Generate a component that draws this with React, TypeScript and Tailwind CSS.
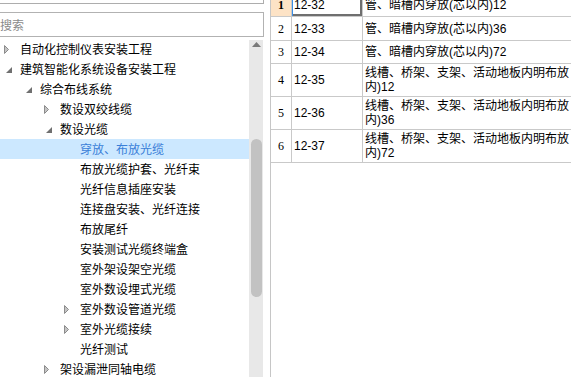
import React from 'react'

type Node = {
  level: number
  text: string
  arrow?: 'open' | 'closed'
  selected?: boolean
}

const nodes: Node[] = [
  { level: 0, text: '自动化控制仪表安装工程', arrow: 'closed' },
  { level: 0, text: '建筑智能化系统设备安装工程', arrow: 'open' },
  { level: 1, text: '综合布线系统', arrow: 'open' },
  { level: 2, text: '数设双绞线缆', arrow: 'closed' },
  { level: 2, text: '数设光缆', arrow: 'open' },
  { level: 3, text: '穿放、布放光缆', selected: true },
  { level: 3, text: '布放光缆护套、光纤束' },
  { level: 3, text: '光纤信息插座安装' },
  { level: 3, text: '连接盘安装、光纤连接' },
  { level: 3, text: '布放尾纤' },
  { level: 3, text: '安装测试光缆终端盒' },
  { level: 3, text: '室外架设架空光缆' },
  { level: 3, text: '室外数设埋式光缆' },
  { level: 3, text: '室外数设管道光缆', arrow: 'closed' },
  { level: 3, text: '室外光缆接续', arrow: 'closed' },
  { level: 3, text: '光纤测试' },
  { level: 2, text: '架设漏泄同轴电缆', arrow: 'closed' },
]

const indent = ['pl-0', 'pl-5', 'pl-10', 'pl-15']

const rows = [
  { n: '1', code: '12-32', lines: ['管、暗槽内穿放(芯以内)12'], active: true },
  { n: '2', code: '12-33', lines: ['管、暗槽内穿放(芯以内)36'] },
  { n: '3', code: '12-34', lines: ['管、暗槽内穿放(芯以内)72'] },
  { n: '4', code: '12-35', lines: ['线槽、桥架、支架、活动地板内明布放', '内)12'] },
  { n: '5', code: '12-36', lines: ['线槽、桥架、支架、活动地板内明布放', '内)36'] },
  { n: '6', code: '12-37', lines: ['线槽、桥架、支架、活动地板内明布放', '内)72'] },
]

function Arrow({ kind }: { kind?: 'open' | 'closed' }) {
  if (kind === 'closed') {
    return (
      <svg width="5" height="9" viewBox="0 0 5 9" className="ml-[4px]">
        <path d="M0.5 0.5 L4.5 4.5 L0.5 8.5 Z" fill="#c4c4c4" stroke="#8c8c8c" />
      </svg>
    )
  }
  if (kind === 'open') {
    return (
      <svg width="6" height="6" viewBox="0 0 6 6" className="ml-[6px] translate-y-[1px]">
        <path d="M6 0 L6 6 L0 6 Z" fill="#707070" />
      </svg>
    )
  }
  return null
}

export default function App() {
  return (
    <div
      className="flex h-[377px] w-[571px] overflow-hidden bg-white text-[12px] text-black"
      style={{ fontFamily: '"Noto Sans CJK SC", sans-serif' }}
    >
      {/* left: search + tree */}
      <div className="flex w-[264px] shrink-0 flex-col">
        <div className="h-[4px] border-b border-r border-[#adadad]" />
        <div className="mt-[8px] flex h-[25px] items-center border-y border-r border-[#b2b2b2] text-[#8a8a8a]">
          搜索
        </div>
        <div className="mt-[2px] flex min-h-0 flex-1">
          <div className="w-[249px] overflow-hidden">
            {nodes.map((node, i) => (
              <div
                key={i}
                className={
                  'flex h-[20px] items-center whitespace-nowrap ' +
                  indent[node.level] +
                  (node.selected ? ' bg-[#cce8ff] text-[#3a7fd8]' : '')
                }
              >
                <div className="flex w-[20px] shrink-0 items-center">
                  <Arrow kind={node.arrow} />
                </div>
                <span className="leading-[20px]">{node.text}</span>
              </div>
            ))}
          </div>
          {/* scrollbar */}
          <div className="mt-px flex w-[14px] flex-col items-center bg-[#e8e8e8]">
            <svg width="9" height="5" viewBox="0 0 9 5" className="mt-[2px]">
              <path d="M0 5 L4.5 0 L9 5 Z" fill="#7a7a7a" />
            </svg>
            <div className="mt-[92px] h-[158px] w-[11px] rounded-full bg-[#c2c2c2]" />
          </div>
        </div>
      </div>

      <div className="w-[6px] shrink-0" />

      {/* right: grid */}
      <div
        className="flex-1 border-l border-[#c6c6c6]"
        style={{ fontFamily: '"Liberation Sans", "Noto Sans CJK SC", sans-serif' }}
      >
        <div className="-mt-[7px] w-[400px]">
          {rows.map((r) => (
            <div
              key={r.n}
              className={
                'flex border-b border-[#c9c9c9] ' +
                (r.lines.length > 1 ? 'h-[33px]' : r.n === '3' ? 'h-[23px]' : 'h-[24px]')
              }
            >
              <div
                className={
                  'flex w-[21px] shrink-0 items-center justify-center border-r border-[#c9c9c9] ' +
                  (r.active ? 'bg-[#fde3c6] font-bold' : '')
                }
                style={{ fontFamily: '"Liberation Serif", serif' }}
              >
                {r.n}
              </div>
              <div
                className={
                  'flex w-[71px] shrink-0 items-center border-r border-[#c9c9c9] pl-[2px] ' +
                  (r.active ? 'shadow-[inset_1px_0_0_#3a8ee6,inset_-2px_-2px_0_#6f6f6f]' : '')
                }
              >
                {r.code}
              </div>
              <div className="flex flex-1 flex-col justify-center pl-[2px] leading-[14px]">
                {r.lines.map((l, j) => (
                  <div key={j} className="whitespace-nowrap">
                    {l}
                  </div>
                ))}
              </div>
            </div>
          ))}
        </div>
      </div>
    </div>
  )
}
